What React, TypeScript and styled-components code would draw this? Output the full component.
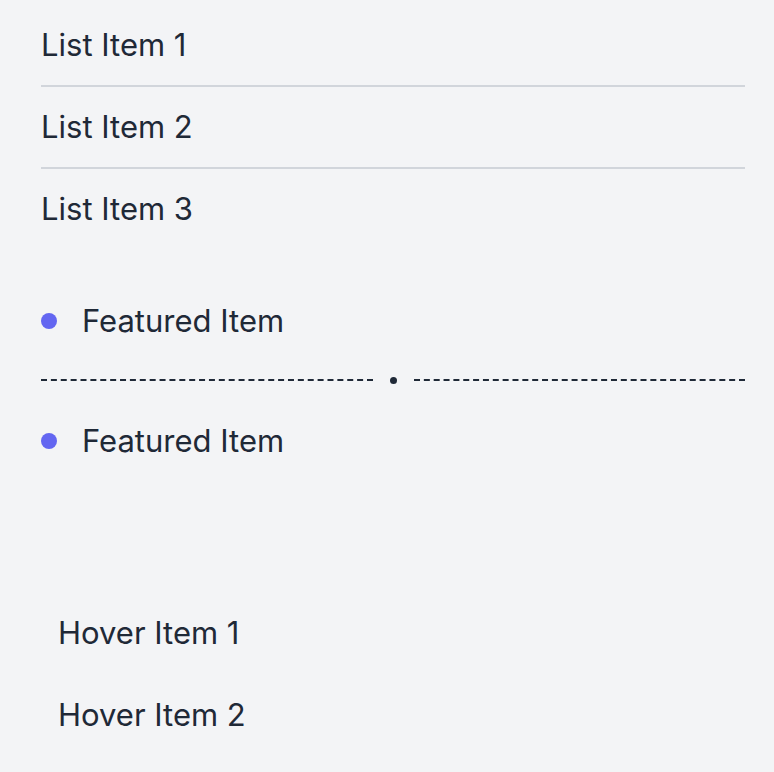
import React from "react";
import styled, { createGlobalStyle } from "styled-components";

const GlobalStyle = createGlobalStyle`
  html, body {
    margin: 0;
    padding: 0;
    background: #f3f4f6;
  }
  body {
    font-family: Inter, "Noto Sans", sans-serif;
    color: #1f2937;
  }
`;

function App() {
  return (
    <>
      <GlobalStyle />
      <Page>
        <PlainList>
          <PlainItem>List Item 1</PlainItem>
          <PlainItem>List Item 2</PlainItem>
          <PlainItem>List Item 3</PlainItem>
        </PlainList>

        <FeaturedList>
          <FeaturedItem>Featured Item</FeaturedItem>
          <DotDivider>
            <Dash />
            <CenterDot />
            <Dash />
          </DotDivider>
          <FeaturedItem>Featured Item</FeaturedItem>
        </FeaturedList>

        <HoverList>
          <HoverItem>Hover Item 1</HoverItem>
          <HoverItem>Hover Item 2</HoverItem>
        </HoverList>
      </Page>
    </>
  );
}

export default App;

const Page = styled.div`
  padding: 5px 29px 16px 41px;
  display: flex;
  flex-direction: column;
`;

const PlainList = styled.ul`
  list-style: none;
  margin: 0;
  padding: 0;
`;

const PlainItem = styled.li`
  font-size: 31px;
  line-height: 48px;
  padding: 16px 0;
  border-bottom: 2px solid #d1d5db;
  &:last-child {
    border-bottom: none;
  }
`;

const FeaturedList = styled.ul`
  list-style: none;
  margin: 48px 0 0;
  padding: 0;
`;

const FeaturedItem = styled.li`
  display: flex;
  align-items: center;
  gap: 25px;
  font-size: 31px;
  line-height: 48px;
  &::before {
    content: "";
    width: 16px;
    height: 16px;
    border-radius: 50%;
    background: #6366f1;
    flex-shrink: 0;
  }
`;

const DotDivider = styled.li`
  display: flex;
  align-items: center;
  gap: 17px;
  height: 8px;
  margin: 31px 0 33px;
`;

const Dash = styled.span`
  flex: 1;
  border-top: 2px dashed #1f2937;
`;

const CenterDot = styled.span`
  width: 7px;
  height: 7px;
  border-radius: 50%;
  background: #1f2937;
  flex-shrink: 0;
`;

const HoverList = styled.ul`
  list-style: none;
  margin: 128px 0 0;
  padding: 0;
  display: flex;
  flex-direction: column;
  gap: 2px;
`;

const HoverItem = styled.li`
  font-size: 31px;
  line-height: 48px;
  padding: 16px 17px;
  border-radius: 8px;
`;
